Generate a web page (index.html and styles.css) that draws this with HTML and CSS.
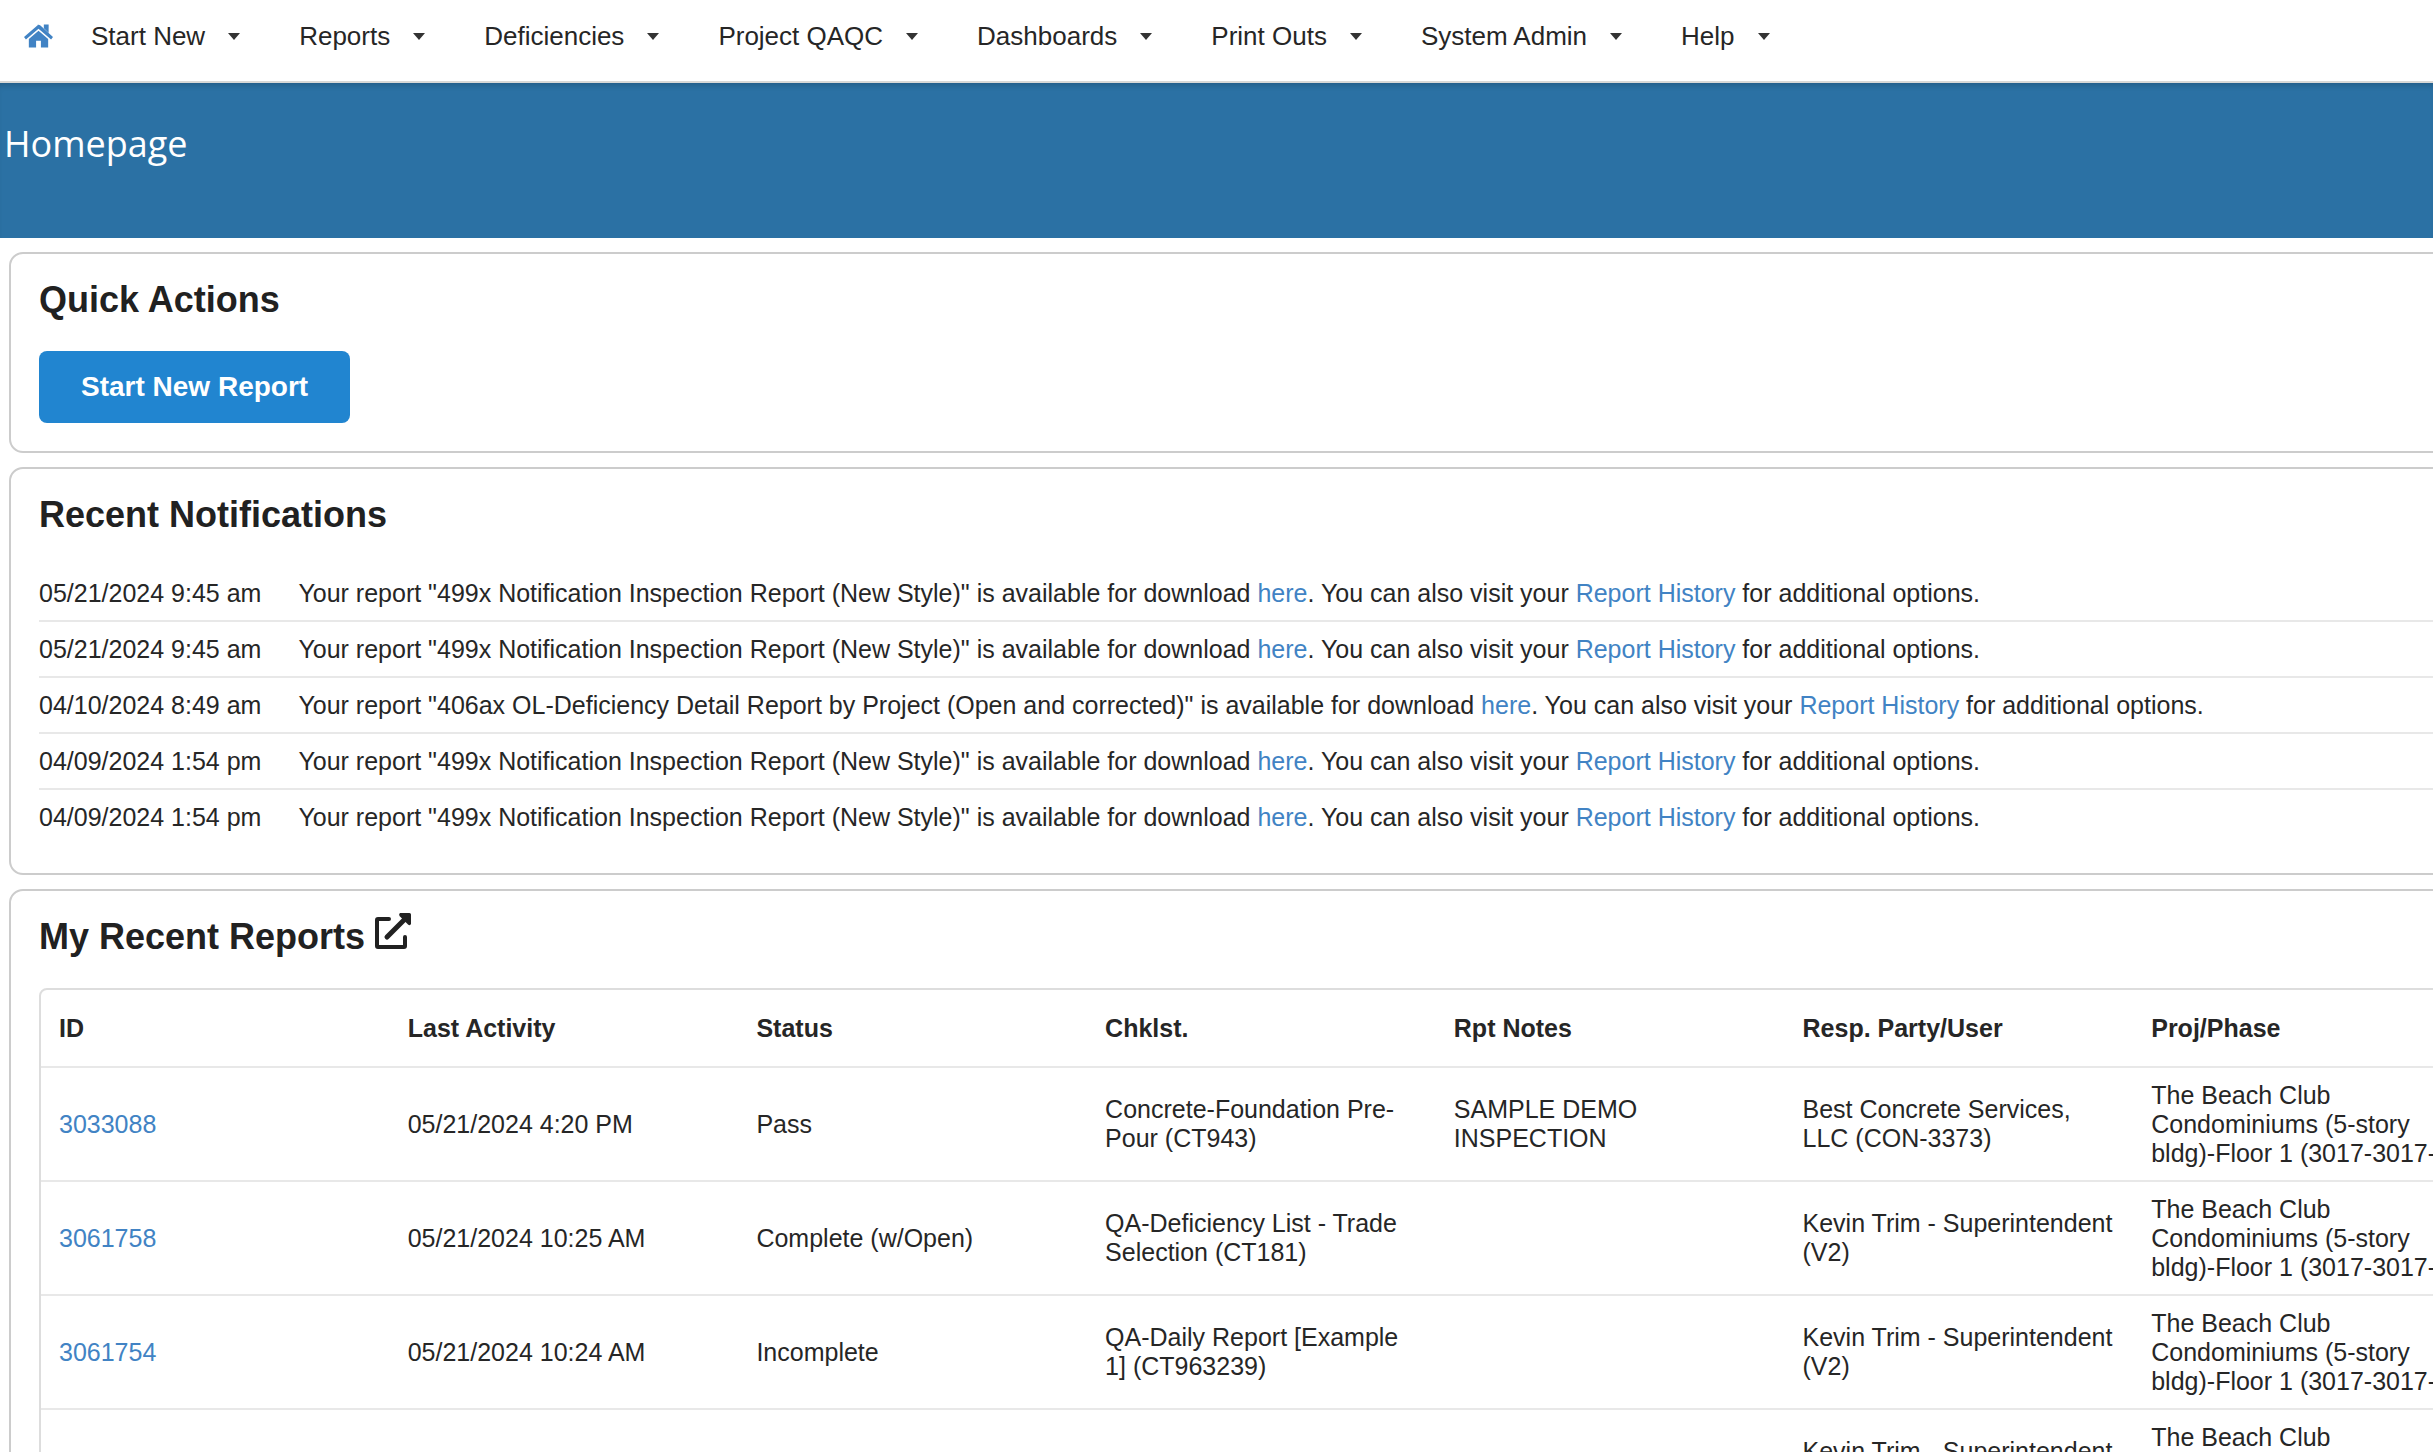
FILE: index.html
```html
<!DOCTYPE html>
<html lang="en">
<head>
<meta charset="utf-8">
<title>Homepage</title>
<link rel="stylesheet" href="styles.css">
</head>
<body>
<nav class="nav" aria-label="Main">
  <a class="home" href="#" aria-label="Home"><svg class="home-icon" viewBox="0 0 30 24"><path d="M20.500 0h5v9l-5-5z"/><path d="M15 0 0 13l2 2.500L15 4.500 28 15.500l2-2.500L17 1.200Q15-.5 13 1.200z"/><path d="M15 6.500 5 15v9h7.500v-7h5v7H25v-9z"/></svg></a>
  <button class="menu" type="button">Start New<span class="caret"></span></button>
  <button class="menu" type="button">Reports<span class="caret"></span></button>
  <button class="menu" type="button">Deficiencies<span class="caret"></span></button>
  <button class="menu" type="button">Project QAQC<span class="caret"></span></button>
  <button class="menu" type="button">Dashboards<span class="caret"></span></button>
  <button class="menu" type="button">Print Outs<span class="caret"></span></button>
  <button class="menu" type="button">System Admin<span class="caret"></span></button>
  <button class="menu" type="button">Help<span class="caret"></span></button>
</nav>
<header class="hero"><h1 class="hero-title">Homepage</h1></header>
<main class="content">
  <section class="card">
    <h2 class="title">Quick Actions</h2>
    <button class="primary" type="button">Start New Report</button>
  </section>
  <section class="card">
    <h2 class="title">Recent Notifications</h2>
    <ul class="notices">
      <li class="notice"><time>05/21/2024 9:45 am</time><span>Your report "499x Notification Inspection Report (New Style)" is available for download <a href="#">here</a>. You can also visit your <a href="#">Report History</a> for additional options.</span></li>
      <li class="notice"><time>05/21/2024 9:45 am</time><span>Your report "499x Notification Inspection Report (New Style)" is available for download <a href="#">here</a>. You can also visit your <a href="#">Report History</a> for additional options.</span></li>
      <li class="notice"><time>04/10/2024 8:49 am</time><span>Your report "406ax OL-Deficiency Detail Report by Project (Open and corrected)" is available for download <a href="#">here</a>. You can also visit your <a href="#">Report History</a> for additional options.</span></li>
      <li class="notice"><time>04/09/2024 1:54 pm</time><span>Your report "499x Notification Inspection Report (New Style)" is available for download <a href="#">here</a>. You can also visit your <a href="#">Report History</a> for additional options.</span></li>
      <li class="notice"><time>04/09/2024 1:54 pm</time><span>Your report "499x Notification Inspection Report (New Style)" is available for download <a href="#">here</a>. You can also visit your <a href="#">Report History</a> for additional options.</span></li>
    </ul>
  </section>
  <section class="card">
    <h2 class="title">My Recent Reports <a class="open" href="#" aria-label="Open all reports"><svg class="open-icon" viewBox="0 0 36 36"><path d="M14 6H3Q2 6 2 7v26q0 1 1 1h26q1 0 1-1V24" fill="none" stroke="currentColor" stroke-width="4" stroke-linecap="round"/><path d="M12 24 31 5" fill="none" stroke="currentColor" stroke-width="5" stroke-linecap="round"/><path d="M25 0h9.500q1.500 0 1.500 1.500V11q-1 2-3 .5L24.500 3q-1-2 .5-3z"/></svg></a></h2>
    <table class="reports">
      <thead>
        <tr><th>ID</th><th>Last Activity</th><th>Status</th><th>Chklst.</th><th>Rpt Notes</th><th>Resp. Party/User</th><th>Proj/Phase</th></tr>
      </thead>
      <tbody>
        <tr><td><a href="#">3033088</a></td><td>05/21/2024 4:20 PM</td><td>Pass</td><td>Concrete-Foundation Pre-Pour (CT943)</td><td>SAMPLE DEMO INSPECTION</td><td>Best Concrete Services, LLC (CON-3373)</td><td>The Beach Club Condominiums (5-story bldg)-Floor 1 (3017-3017-</td></tr>
        <tr><td><a href="#">3061758</a></td><td>05/21/2024 10:25 AM</td><td>Complete (w/Open)</td><td>QA-Deficiency List - Trade Selection (CT181)</td><td></td><td>Kevin Trim - Superintendent (V2)</td><td>The Beach Club Condominiums (5-story bldg)-Floor 1 (3017-3017-</td></tr>
        <tr><td><a href="#">3061754</a></td><td>05/21/2024 10:24 AM</td><td>Incomplete</td><td>QA-Daily Report [Example 1] (CT963239)</td><td></td><td>Kevin Trim - Superintendent (V2)</td><td>The Beach Club Condominiums (5-story bldg)-Floor 1 (3017-3017-</td></tr>
        <tr><td></td><td></td><td></td><td></td><td></td><td>Kevin Trim - Superintendent (V2)</td><td>The Beach Club Condominiums (5-story bldg)-Floor 1 (3017-3017-</td></tr>
      </tbody>
    </table>
  </section>
</main>
</body>
</html>
```
FILE: styles.css
```css
* { box-sizing: border-box; }

html { overflow: hidden; }

body {
  margin: 0;
  background: #fff;
  color: #262626;
  font-family: "Liberation Sans", Arial, sans-serif;
  font-size: 25px;
  line-height: 29px;
}

a { color: #4183c4; text-decoration: none; }

.nav {
  display: flex;
  align-items: flex-start;
  height: 83px;
  padding: 21px 24px 0;
  border-bottom: 2px solid #d9d8d6;
}

.home { display: flex; padding-top: 3px; margin-right: 38px; }
.home-icon { width: 29px; height: 24px; fill: currentColor; }

.menu {
  display: flex;
  align-items: center;
  gap: 23px;
  margin: 0 59px 0 0;
  padding: 0;
  border: 0;
  background: none;
  color: inherit;
  font: inherit;
  font-size: 26px;
  line-height: 30px;
}

.menu:last-child { margin-right: 0; }

.caret {
  border: solid transparent;
  border-width: 7px 6px 0;
  border-top-color: #333;
}

.hero {
  height: 155px;
  padding: 36px 4px;
  background: #2b71a4;
  box-shadow: inset 0 6px 6px -4px #0003;
}

.hero-title {
  margin: 0;
  color: #fff;
  font-family: "Open Sans", sans-serif;
  font-size: 36px;
  font-weight: 400;
  line-height: 50px;
}

.content {
  display: flex;
  flex-direction: column;
  gap: 14px;
  width: max-content;
  min-width: 100%;
  padding: 14px 9px;
}

.card {
  padding: 25px 28px 28px;
  border: 2px solid #ccc;
  border-radius: 14px;
}

.title {
  margin: 0 0 30px;
  color: #212121;
  font-size: 36px;
  line-height: 42px;
}

.primary {
  display: block;
  padding: 20px 42px;
  border: 0;
  border-radius: 8px;
  background: #2185d0;
  color: #fff;
  font: bold 28px/32px "Liberation Sans", Arial, sans-serif;
}

.notices { margin: 0; padding: 0; list-style: none; }

.notice {
  display: flex;
  gap: 37px;
  padding: 13px 0 12px;
  border-bottom: 2px solid #e8e8e8;
}

.notice:last-child { padding-bottom: 13px; border-bottom: 0; }

.open { color: inherit; }
.open-icon { width: 36px; height: 36px; margin-top: -8px; fill: currentColor; }

.reports {
  table-layout: fixed;
  width: 2445px;
  border: 2px solid #ddd;
  border-radius: 8px;
  border-spacing: 0;
}

.reports th,
.reports td {
  height: 114px;
  padding: 12px 18px;
  border-bottom: 2px solid #e8e8e8;
  text-align: left;
  vertical-align: middle;
}

.reports th { height: 78px; }
```
